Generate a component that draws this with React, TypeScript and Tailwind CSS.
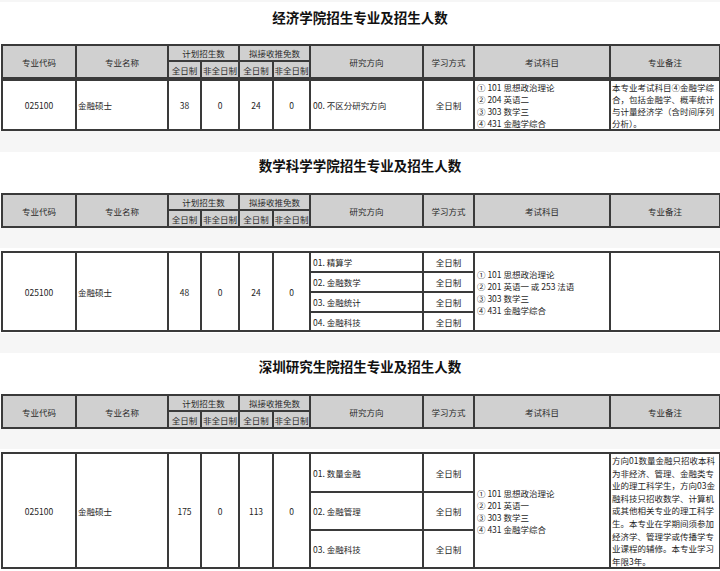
import React from "react";

function Cols() {
  return (
    <colgroup>
      <col className="w-[74px]" />
      <col className="w-[92px]" />
      <col className="w-[33px]" />
      <col className="w-[38px]" />
      <col className="w-[34px]" />
      <col className="w-[37px]" />
      <col className="w-[113px]" />
      <col className="w-[51px]" />
      <col className="w-[136px]" />
      <col className="w-[110px]" />
    </colgroup>
  );
}

function Title({ text }: { text: string }) {
  return (
    <div className="h-[22px] leading-[22px] text-center text-[13.5px] font-bold text-[#111]">
      {text}
    </div>
  );
}

function Header() {
  const th =
    "border-2 border-[#3a3a3a] bg-[#d0d0d0] p-0 text-center align-middle font-normal";
  return (
    <table className="table-fixed border-collapse w-[718px] ml-px text-[8.5px] leading-[12px] text-[#2a2a2a]">
      <Cols />
      <tbody>
        <tr className="h-[16px]">
          <td rowSpan={2} className={th}>专业代码</td>
          <td rowSpan={2} className={th}>专业名称</td>
          <td colSpan={2} className={th + " border-b"}>计划招生数</td>
          <td colSpan={2} className={th + " border-b"}>拟接收推免数</td>
          <td rowSpan={2} className={th}>研究方向</td>
          <td rowSpan={2} className={th}>学习方式</td>
          <td rowSpan={2} className={th}>考试科目</td>
          <td rowSpan={2} className={th}>专业备注</td>
        </tr>
        <tr className="h-[17px]">
          <td className={th}>全日制</td>
          <td className={th}>非全日制</td>
          <td className={th}>全日制</td>
          <td className={th}>非全日制</td>
        </tr>
      </tbody>
    </table>
  );
}

function Lines({ lines }: { lines: string[] }) {
  return (
    <div>
      {lines.map((l, i) => (
        <div key={i} className="whitespace-nowrap">
          {l}
        </div>
      ))}
    </div>
  );
}

export default function App() {
  const td = "border-2 border-[#3a3a3a] p-0 align-middle";
  const c = td + " text-center";
  const l = td + " text-left pl-[1px]";
  const l2 = td + " text-left pl-[2px]";
  const table =
    "table-fixed border-collapse w-[718px] ml-px text-[8.5px] leading-[12px] text-[#1e1e1e] bg-white";
  return (
    <div
      className="w-[720px] h-[571px] overflow-hidden bg-white"
      style={{ fontFamily: '"Noto Sans CJK SC", "Noto Sans", sans-serif' }}
    >
      <div className="h-[2px] bg-[#f6f6f6]" />

      {/* Section 1 */}
      <div className="pt-[4px]">
        <Title text="经济学院招生专业及招生人数" />
        <div className="mt-[16px]">
          <Header />
          <table className={table}>
            <Cols />
            <tbody>
              <tr className="h-[50px]">
                <td className={c}>025100</td>
                <td className={l}>金融硕士</td>
                <td className={c}>38</td>
                <td className={c}>0</td>
                <td className={c}>24</td>
                <td className={c}>0</td>
                <td className={l2}>00. 不区分研究方向</td>
                <td className={c}>全日制</td>
                <td className={l2}>
                  <Lines
                    lines={[
                      "① 101 思想政治理论",
                      "② 204 英语二",
                      "③ 303 数学三",
                      "④ 431 金融学综合",
                    ]}
                  />
                </td>
                <td className={l}>
                  <Lines
                    lines={[
                      "本专业考试科目④金融学综",
                      "合，包括金融学、概率统计",
                      "与计量经济学（含时间序列",
                      "分析）。",
                    ]}
                  />
                </td>
              </tr>
            </tbody>
          </table>
        </div>
      </div>

      <div className="h-[21px] bg-[#f6f6f6]" />

      {/* Section 2 */}
      <div className="pt-[2px]">
        <Title text="数学科学学院招生专业及招生人数" />
        <div className="mt-[17px]">
          <Header />
        </div>
        <div className="h-[20px] bg-[#f6f6f6]" />
        <div className="h-[3px]" />
        <table className={table}>
          <Cols />
          <tbody>
            <tr className="h-[20px]">
              <td rowSpan={4} className={c}>025100</td>
              <td rowSpan={4} className={l}>金融硕士</td>
              <td rowSpan={4} className={c}>48</td>
              <td rowSpan={4} className={c}>0</td>
              <td rowSpan={4} className={c}>24</td>
              <td rowSpan={4} className={c}>0</td>
              <td className={l2}>01. 精算学</td>
              <td className={c}>全日制</td>
              <td rowSpan={4} className={l2}>
                <Lines
                  lines={[
                    "① 101 思想政治理论",
                    "② 201 英语一 或 253 法语",
                    "③ 303 数学三",
                    "④ 431 金融学综合",
                  ]}
                />
              </td>
              <td rowSpan={4} className={l}></td>
            </tr>
            <tr className="h-[20px]">
              <td className={l2}>02. 金融数学</td>
              <td className={c}>全日制</td>
            </tr>
            <tr className="h-[20px]">
              <td className={l2}>03. 金融统计</td>
              <td className={c}>全日制</td>
            </tr>
            <tr className="h-[19px]">
              <td className={l2}>04. 金融科技</td>
              <td className={c}>全日制</td>
            </tr>
          </tbody>
        </table>
      </div>

      <div className="h-px" />
      <div className="h-[20px] bg-[#f6f6f6]" />

      {/* Section 3 */}
      <div className="pt-[2px]">
        <Title text="深圳研究生院招生专业及招生人数" />
        <div className="mt-[17px]">
          <Header />
        </div>
        <div className="h-[20px] bg-[#f6f6f6]" />
        <div className="h-[3px]" />
        <table className={table}>
          <Cols />
          <tbody>
            <tr className="h-[39px]">
              <td rowSpan={3} className={c}>025100</td>
              <td rowSpan={3} className={l}>金融硕士</td>
              <td rowSpan={3} className={c}>175</td>
              <td rowSpan={3} className={c}>0</td>
              <td rowSpan={3} className={c}>113</td>
              <td rowSpan={3} className={c}>0</td>
              <td className={l2}>01. 数量金融</td>
              <td className={c}>全日制</td>
              <td rowSpan={3} className={l2}>
                <Lines
                  lines={[
                    "① 101 思想政治理论",
                    "② 201 英语一",
                    "③ 303 数学三",
                    "④ 431 金融学综合",
                  ]}
                />
              </td>
              <td rowSpan={3} className={l + " leading-[12.6px]"}>
                <Lines
                  lines={[
                    "方向01数量金融只招收本科",
                    "为非经济、管理、金融类专",
                    "业的理工科学生，方向03金",
                    "融科技只招收数学、计算机",
                    "或其他相关专业的理工科学",
                    "生。本专业在学期间须参加",
                    "经济学、管理学或传播学专",
                    "业课程的辅修。本专业学习",
                    "年限3年。",
                  ]}
                />
              </td>
            </tr>
            <tr className="h-[38px]">
              <td className={l2}>02. 金融管理</td>
              <td className={c}>全日制</td>
            </tr>
            <tr className="h-[38px]">
              <td className={l2}>03. 金融科技</td>
              <td className={c}>全日制</td>
            </tr>
          </tbody>
        </table>
      </div>
    </div>
  );
}
